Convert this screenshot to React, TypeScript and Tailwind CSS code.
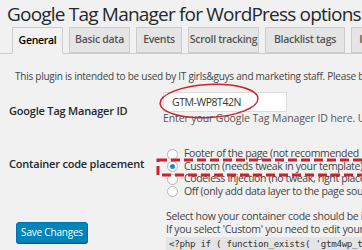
import React from "react";

const font = { fontFamily: '"Open Sans", "Noto Sans", sans-serif' };

function Radio({ checked }: { checked?: boolean }) {
  return (
    <span className="w-[11px] h-[11px] rounded-full border border-[#b4b9be] bg-white flex items-center justify-center shrink-0">
      {checked && <span className="w-[5px] h-[5px] rounded-full bg-[#1e8cbe]" />}
    </span>
  );
}

export default function App() {
  const tabs: [string, string][] = [
    ["General", "w-[51px]"],
    ["Basic data", "w-[61px]"],
    ["Events", "w-[46px]"],
    ["Scroll tracking", "w-[71px]"],
    ["Blacklist tags", "w-[80px]"],
    ["Integration", "w-[70px]"],
  ];
  const radios = [
    "Footer of the page (not recommended",
    "Custom (needs tweak in your template)",
    "Codeless injection (no tweak, right place",
    "Off (only add data layer to the page sou",
  ];
  return (
    <div style={font} className="w-[362px] h-[250px] overflow-hidden bg-[#f1f1f1] relative text-[#23282d]">
      <h1 className="pl-[7px] pt-[2px] h-[27px] text-[19px] tracking-[-0.8px] leading-[24px] whitespace-nowrap">
        Google Tag Manager for WordPress options
      </h1>
      <div className="flex gap-[6px] pl-[12px] border-b border-[#ccc] h-[27px] whitespace-nowrap">
        {tabs.map(([t, w], i) => (
          <div
            key={t}
            className={
              w +
              " h-[26px] border border-[#ccc] text-[10.5px] tracking-[-0.3px] font-semibold flex items-center justify-center shrink-0 " +
              (i === 0 ? "bg-[#f1f1f1] text-black h-[27px] border-b-[#f1f1f1]" : "bg-[#e5e5e5] text-[#555]")
            }
          >
            {t}
          </div>
        ))}
      </div>
      <p className="pl-[15px] mt-[15px] text-[10px] tracking-[-0.25px] leading-[14px] whitespace-nowrap text-[#444]">
        This plugin is intended to be used by IT girls&amp;guys and marketing staff. Please be sure you
      </p>
      <div className="grid grid-cols-[154px_1fr] mt-[9px]">
        <div className="pl-[9px] pt-[11px] text-[11px] tracking-[-0.2px] font-semibold leading-[16px] whitespace-nowrap">
          Google Tag Manager ID
        </div>
        <div className="flex flex-col">
          <div className="ml-[9px] w-[124px] h-[20px] bg-white border border-[#ddd] text-[10.5px] tracking-[-0.45px] leading-[18px] pl-[8px] text-[#32373c]">
            GTM-WP8T42N
          </div>
          <div className="ml-[9px] -mt-[1px] text-[10.5px] tracking-[-0.1px] leading-[14px] whitespace-nowrap text-[#555]">
            Enter your Google Tag Manager ID here. Use
          </div>
        </div>
        <div className="pl-[9px] pt-[31px] text-[11px] tracking-[-0.2px] font-semibold leading-[16px] whitespace-nowrap flex flex-col">
          <span>Container code placement</span>
          <button className="mt-[50px] ml-[7px] w-[72px] h-[21px] bg-[#0085ba] border border-[#0073aa] rounded-[3px] text-white text-[10px] tracking-[-0.2px] font-normal leading-[19px] shadow-[0_1px_0_#006799]">
            Save Changes
          </button>
        </div>
        <div className="flex flex-col pt-[23px] pl-[13px] whitespace-nowrap">
          {radios.map((r, i) => (
            <div key={r} className="flex items-center gap-[6px] h-[12.5px] text-[10.5px] tracking-[-0.35px] text-[#444]">
              <Radio checked={i === 1} />
              <span>{r}</span>
            </div>
          ))}
          <div className="mt-[12px] -ml-[1px] text-[10.5px] tracking-[-0.3px] leading-[13px] text-[#444]">
            <div>Select how your container code should be inserted</div>
            <div>If you select 'Custom' you need to edit your</div>
            <div
              className="mt-[1px] bg-[#e4e4e4] pl-[3px] text-[9.2px] leading-[14px] text-[#333]"
              style={{ fontFamily: '"DejaVu Sans Mono", monospace' }}
            >
              &lt;?php if ( function_exists( 'gtm4wp_the_gtm_tag' ) )
            </div>
          </div>
        </div>
      </div>
      <svg className="absolute left-0 top-0 pointer-events-none" width="362" height="250">
        <ellipse cx="209" cy="101" rx="49" ry="16.5" transform="rotate(-3 209 101)" fill="none" stroke="#d0202a" strokeWidth="1.4" />
        <rect x="158" y="160" width="220" height="15" fill="none" stroke="#d0202a" strokeWidth="3" strokeDasharray="9 4" />
      </svg>
    </div>
  );
}
